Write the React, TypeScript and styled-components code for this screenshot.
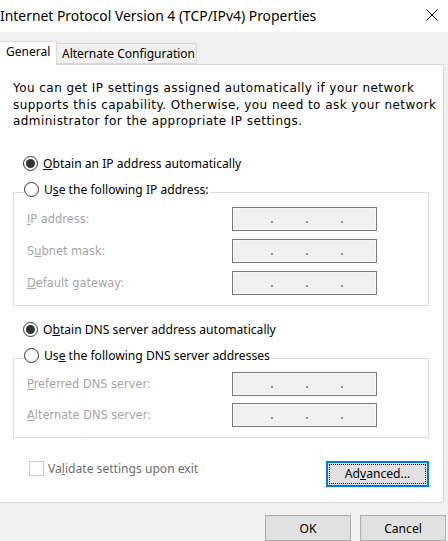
import React from "react";
import styled, { createGlobalStyle } from "styled-components";

const Global = createGlobalStyle`
  html, body { margin: 0; padding: 0; background: #f0f0f0; }
  body { width: 448px; height: 541px; overflow: hidden; }
`;

const UI = `"Noto Sans", "Open Sans", sans-serif`;
const DLG = `"DejaVu Sans", Verdana, sans-serif`;

const Window = styled.div`
  width: 448px;
  height: 541px;
  display: flex;
  flex-direction: column;
  background: #f0f0f0;
  font-family: ${UI};
`;

const TitleBar = styled.div`
  height: 32px;
  background: #ffffff;
  display: flex;
  align-items: center;
  justify-content: space-between;
  padding: 0 10px 0 0;
  box-sizing: border-box;
`;

const Title = styled.div`
  font-size: 13.9px;
  color: #000;
  margin-top: -1px;
`;

const Close = styled.div`
  width: 12px;
  height: 12px;
  display: flex;
  margin-top: -2px;
`;

const TabStrip = styled.div`
  display: flex;
  align-items: flex-end;
  height: 32px;
  box-sizing: border-box;
  margin-right: 4px;
`;

const Tab = styled.div<{ $active?: boolean }>`
  box-sizing: border-box;
  height: ${(p) => (p.$active ? 24 : 21)}px;
  padding: 0 ${(p) => (p.$active ? 6 : 5)}px;
  background: ${(p) => (p.$active ? "#ffffff" : "#f0f0f0")};
  border: 1px solid #d9d9d9;
  border-left: ${(p) => (p.$active ? "none" : "1px solid #d9d9d9")};
  border-bottom: ${(p) => (p.$active ? "none" : "1px solid #d9d9d9")};
  margin-left: ${(p) => (p.$active ? 0 : -1)}px;
  margin-bottom: ${(p) => (p.$active ? -1 : 0)}px;
  position: relative;
  z-index: ${(p) => (p.$active ? 1 : 0)};
  font-size: 12px;
  line-height: 20px;
  color: #000;
  white-space: nowrap;
  width: ${(p) => (p.$active ? 57 : 141)}px;
`;

const Panel = styled.div`
  box-sizing: border-box;
  height: 439px;
  margin-right: 4px;
  background: #ffffff;
  border: 1px solid #d9d9d9;
  border-left: none;
  padding: 15px 14px 0 13px;
  display: flex;
  flex-direction: column;
`;

const Description = styled.p`
  margin: 0;
  font-family: ${DLG};
  font-size: 12px;
  letter-spacing: 0.45px;
  line-height: 16.5px;
  color: #000;
  white-space: nowrap;
`;

const RadioRow = styled.label<{ $mt: number; $ml: number }>`
  display: flex;
  align-items: center;
  gap: 5px;
  height: 16px;
  margin-top: ${(p) => p.$mt}px;
  margin-left: ${(p) => p.$ml}px;
  font-size: 12.1px;
  color: #000;
  background: #fff;
  width: fit-content;
  padding-right: 1px;
`;

const RadioCircle = styled.span<{ $on?: boolean }>`
  box-sizing: border-box;
  width: 15px;
  height: 15px;
  border-radius: 50%;
  border: 1px solid #333333;
  background: #fff;
  display: flex;
  align-items: center;
  justify-content: center;
  flex: none;
  &::after {
    content: "";
    display: ${(p) => (p.$on ? "block" : "none")};
    width: 9px;
    height: 9px;
    border-radius: 50%;
    background: #333333;
  }
`;

const Group = styled.div<{ $mt: number; $gap: number }>`
  box-sizing: border-box;
  margin-top: ${(p) => p.$mt}px;
  border: 1px solid #dcdcdc;
  display: flex;
  flex-direction: column;
  gap: ${(p) => p.$gap}px;
  padding: 0 0 10px 13px;
`;

const Legend = styled.div`
  margin-top: -11px;
  margin-left: -3px;
  margin-bottom: 1px;
  background: #fff;
  width: fit-content;
`;

const FieldRow = styled.div`
  display: flex;
  align-items: center;
  height: 24px;
`;

const FieldLabel = styled.span`
  width: 205px;
  font-family: ${DLG};
  font-size: 11.4px;
  color: #a6a6a6;
`;

const IpBox = styled.div`
  box-sizing: border-box;
  width: 145px;
  height: 24px;
  border: 1px solid #7a7a7a;
  box-shadow: inset 0 0 0 1px #f8f8f8;
  background: #f0f0f0;
  display: flex;
  align-items: flex-end;
  padding: 0 0 7px 38px;
  gap: 33px;
`;

const Dot = styled.span`
  width: 2px;
  height: 2px;
  background: #8e96a0;
`;

const BottomRow = styled.div`
  display: flex;
  justify-content: space-between;
  align-items: flex-start;
  margin-top: 22px;
  padding-left: 16px;
`;

const CheckRow = styled.label`
  display: flex;
  align-items: center;
  gap: 4px;
  font-size: 12.1px;
  color: #6d6d6d;
  height: 16px;
  margin-top: 1px;
`;

const CheckBox = styled.span`
  box-sizing: border-box;
  width: 15px;
  height: 15px;
  border: 1px solid #cccccc;
  background: #fff;
`;

const AdvButton = styled.div`
  box-sizing: border-box;
  width: 103px;
  height: 26px;
  border: 2px solid #0078d7;
  background: #e1e1e1;
  padding: 1px;
  display: flex;
  margin-top: 1px;
`;

const FocusRect = styled.div`
  flex: 1;
  border: 1px dotted #000;
  display: flex;
  align-items: center;
  justify-content: center;
  font-size: 12.1px;
  color: #000;
`;

const Footer = styled.div`
  display: flex;
  justify-content: flex-end;
  gap: 9px;
  padding: 12px 2px 0 0;
`;

const Button = styled.div`
  box-sizing: border-box;
  width: 86px;
  height: 26px;
  border: 1px solid #adadad;
  background: #e1e1e1;
  display: flex;
  align-items: center;
  justify-content: center;
  font-size: 12.1px;
  color: #000;
`;

const Field = ({ label }: { label: React.ReactNode }) => (
  <FieldRow>
    <FieldLabel>{label}</FieldLabel>
    <IpBox>
      <Dot />
      <Dot />
      <Dot />
    </IpBox>
  </FieldRow>
);

export default function App() {
  return (
    <>
      <Global />
      <Window>
        <TitleBar>
          <Title>Internet Protocol Version 4 (TCP/IPv4) Properties</Title>
          <Close>
            <svg width="12" height="12" viewBox="0 0 12 12">
              <path d="M0.5 0.5 L11.5 11.5 M11.5 0.5 L0.5 11.5" stroke="#000" strokeWidth="1" fill="none" />
            </svg>
          </Close>
        </TitleBar>
        <TabStrip>
          <Tab $active>General</Tab>
          <Tab>Alternate Configuration</Tab>
        </TabStrip>
        <Panel>
          <Description>
            You can get IP settings assigned automatically if your network
            <br />
            supports this capability. Otherwise, you need to ask your network
            <br />
            administrator for the appropriate IP settings.
          </Description>
          <RadioRow $mt={26} $ml={10}>
            <RadioCircle $on />
            <span>
              <u>O</u>btain an IP address automatically
            </span>
          </RadioRow>
          <Group $mt={20} $gap={8}>
            <Legend>
              <RadioRow $mt={0} $ml={0}>
                <RadioCircle />
                <span>
                  U<u>s</u>e the following IP address:
                </span>
              </RadioRow>
            </Legend>
            <Field label={<><u>I</u>P address:</>} />
            <Field label={<>S<u>u</u>bnet mask:</>} />
            <Field label={<><u>D</u>efault gateway:</>} />
          </Group>
          <RadioRow $mt={16} $ml={10}>
            <RadioCircle $on />
            <span>
              O<u>b</u>tain DNS server address automatically
            </span>
          </RadioRow>
          <Group $mt={20} $gap={7}>
            <Legend>
              <RadioRow $mt={0} $ml={0}>
                <RadioCircle />
                <span>
                  Us<u>e</u> the following DNS server addresses
                </span>
              </RadioRow>
            </Legend>
            <Field label={<><u>P</u>referred DNS server:</>} />
            <Field label={<><u>A</u>lternate DNS server:</>} />
          </Group>
          <BottomRow>
            <CheckRow>
              <CheckBox />
              <span>
                Va<u>l</u>idate settings upon exit
              </span>
            </CheckRow>
            <AdvButton>
              <FocusRect>
                Ad<u>v</u>anced...
              </FocusRect>
            </AdvButton>
          </BottomRow>
        </Panel>
        <Footer>
          <Button>OK</Button>
          <Button>Cancel</Button>
        </Footer>
      </Window>
    </>
  );
}
